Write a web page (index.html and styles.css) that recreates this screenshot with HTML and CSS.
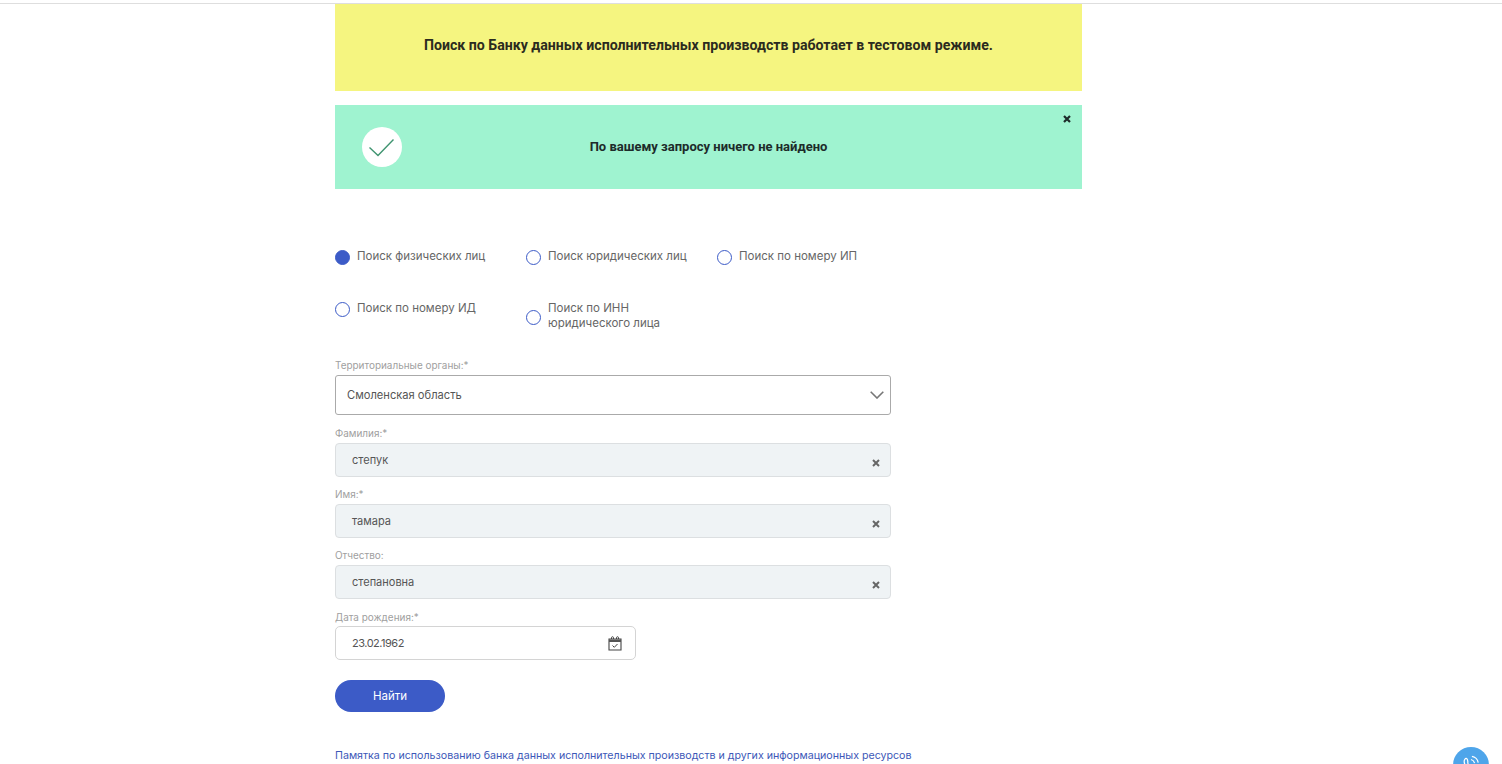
FILE: index.html
```html
<!DOCTYPE html>
<html lang="ru">
<head>
<meta charset="utf-8">
<title>Банк данных исполнительных производств</title>
<link rel="stylesheet" href="styles.css">
</head>
<body>
<div class="topline"></div>
<main class="page">
  <div class="notice notice-yellow">Поиск по Банку данных исполнительных производств работает в тестовом режиме.</div>
  <div class="notice notice-green">
    <span class="check-circle">
      <svg width="25" height="18" viewBox="0 0 25 18"><path d="M0.500 8.500L9 16.500L24.500 0.500" fill="none" stroke="#3f9470" stroke-width="1.400"/></svg>
    </span>
    <span class="notice-text">По вашему запросу ничего не найдено</span>
    <svg class="notice-close" width="8" height="8" viewBox="0 0 8 8"><path d="M1 1L7 7M7 1L1 7" stroke="#1d2b2a" stroke-width="2.200"/></svg>
  </div>

  <div class="radios">
    <label class="radio"><span class="dot dot-on"></span><span>Поиск физических лиц</span></label>
    <label class="radio"><span class="dot"></span><span>Поиск юридических лиц</span></label>
    <label class="radio"><span class="dot"></span><span>Поиск по номеру ИП</span></label>
    <label class="radio"><span class="dot"></span><span>Поиск по номеру ИД</span></label>
    <label class="radio radio-two"><span class="dot"></span><span>Поиск по ИНН<br>юридического лица</span></label>
  </div>

  <form class="form">
    <div class="field field-org">
      <div class="label">Территориальные органы:*</div>
      <div class="select">
        <span>Смоленская область</span>
        <svg width="14" height="8" viewBox="0 0 14 8"><path d="M0.700 0.700L7 7L13.300 0.700" fill="none" stroke="#777" stroke-width="1.600"/></svg>
      </div>
    </div>
    <div class="field">
      <div class="label">Фамилия:*</div>
      <div class="input"><span>степук</span><svg class="clear" width="8" height="8" viewBox="0 0 8 8"><path d="M1 1L7 7M7 1L1 7" stroke="#666" stroke-width="2"/></svg></div>
    </div>
    <div class="field">
      <div class="label">Имя:*</div>
      <div class="input"><span>тамара</span><svg class="clear" width="8" height="8" viewBox="0 0 8 8"><path d="M1 1L7 7M7 1L1 7" stroke="#666" stroke-width="2"/></svg></div>
    </div>
    <div class="field">
      <div class="label">Отчество:</div>
      <div class="input"><span>степановна</span><svg class="clear" width="8" height="8" viewBox="0 0 8 8"><path d="M1 1L7 7M7 1L1 7" stroke="#666" stroke-width="2"/></svg></div>
    </div>
    <div class="field field-date">
      <div class="label">Дата рождения:*</div>
      <div class="date">
        <span>23.02.1962</span>
        <svg width="14" height="15" viewBox="0 0 14 15"><path d="M1 3H13V14H1Z" fill="none" stroke="#444" stroke-width="1.100"/><path d="M1 3.500H13V6H1Z" fill="#555"/><path d="M3.500 3V1.500C3.500 0.500 5.500 0.500 5.500 1.500V3M8.500 3V1.500C8.500 0.500 10.500 0.500 10.500 1.500V3" fill="none" stroke="#444"/><path d="M4.500 9.500L6.300 11.300L9.500 8" fill="none" stroke="#444"/></svg>
      </div>
    </div>
    <button class="btn" type="button">Найти</button>
  </form>

  <a class="memo" href="#">Памятка по использованию банка данных исполнительных производств и других информационных ресурсов</a>
</main>
<div class="call">
  <svg width="18" height="18" viewBox="0 0 20 20"><path d="M3 5C1 8 5 16 9 17C11 17.500 12 16 11 14L8.500 13C7.500 12 6 9 6.500 7.500L6 5C5 3.500 4 3.500 3 5Z" fill="none" stroke="#fff" stroke-width="1.400"/><path d="M10 5C12 5.500 13.500 7 14 9M11 1.500C14.500 2 17.500 5 18 8.500" fill="none" stroke="#fff" stroke-width="1.400"/></svg>
</div>
</body>
</html>
```
FILE: styles.css
```css
* { box-sizing: border-box; }
html, body { margin: 0; padding: 0; height: 764px; overflow: hidden; background: #fff; }
body { font-family: "Inter", "Open Sans", sans-serif; color: #555; }

.topline { height: 4px; border-bottom: 1px solid #dedede; }

.page { width: 747px; margin-left: 335px; }

.notice { display: flex; align-items: center; font-family: "Roboto", "Liberation Sans", sans-serif; font-weight: 700; color: #2b2b1e; }
.notice-yellow { height: 87px; background: #f5f580; justify-content: center; font-size: 14.150px; padding-bottom: 6px; }
.notice-green { position: relative; height: 84px; margin-top: 14px; background: #9ff3d0; padding-left: 27px; font-size: 13px; color: #1d2b2a; }
.notice-text { width: 100%; text-align: center; padding-right: 87px; padding-left: 20px; padding-bottom: 1px; }
.check-circle { flex: none; width: 40px; height: 40px; border-radius: 50%; background: #fff; display: flex; align-items: center; justify-content: center; padding-top: 1px; padding-right: 1px; }
.notice-close { position: absolute; top: 10px; right: 11px; }

.radios { display: grid; grid-template-columns: repeat(3, 191px); grid-auto-rows: 52px; margin-top: 60px; font-size: 11.500px; line-height: 15px; font-weight: 400; }
.radio { display: flex; align-items: flex-start; gap: 7px; color: #666; }
.radio-two .dot { margin-top: 9px; }
.dot { flex: none; width: 15px; height: 15px; margin-top: 1px; border-radius: 50%; border: 1px solid #3c5bc7; background: #fff; }
.dot-on { background: #3c5bc7; }

.form { width: 556px; margin-top: 6px; }
.field { margin-top: 11px; }
.field-org { margin-top: 0; }
.field-org + .field { margin-top: 12px; }
.field-date { margin-top: 12px; }
.label { font-size: 9.950px; line-height: 12px; color: #a0a0a0; margin-bottom: 4px; }
.field-date .label { margin-bottom: 3px; }
.select { display: flex; align-items: center; justify-content: space-between; height: 40px; padding: 0 6px 0 11px; border: 1px solid #aaa; border-radius: 3px; font-size: 11.150px; color: #555; }
.input { display: flex; align-items: center; justify-content: space-between; height: 34px; padding: 0 10px 0 16px; border: 1px solid #dcdfe1; border-radius: 4px; background: #eff3f5; font-size: 11px; color: #555; }
.clear { margin-top: 6px; }
.date { display: flex; align-items: center; justify-content: space-between; width: 301px; height: 34px; padding: 0 13px 0 16px; border: 1px solid #d4d4d4; border-radius: 5px; font-size: 11px; letter-spacing: -0.500px; color: #555; }
.btn { display: block; width: 110px; height: 32px; margin-top: 20px; border: 0; border-radius: 16px; background: #3c5bc7; color: #fff; font-family: inherit; font-size: 11.500px; }

.memo { display: block; margin-top: 37px; font-size: 10.650px; line-height: 14px; color: #3d58b8; text-decoration: none; white-space: nowrap; }

.call { position: fixed; left: 1453px; top: 747px; width: 36px; height: 36px; border-radius: 50%; background: #4ea5ea; display: flex; justify-content: center; padding-top: 8px; }
```
